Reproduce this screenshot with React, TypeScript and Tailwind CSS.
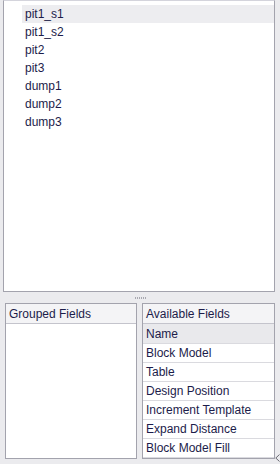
import React from "react";

const items = ["pit1_s1", "pit1_s2", "pit2", "pit3", "dump1", "dump2", "dump3"];
const fields = [
  "Block Model",
  "Table",
  "Design Position",
  "Increment Template",
  "Expand Distance",
  "Block Model Fill",
];

export default function App() {
  return (
    <div
      className="w-[280px] h-[464px] bg-[#ebebee] flex flex-col overflow-hidden relative text-[12px] text-[#1c1c4a]"
      style={{ fontFamily: '"Liberation Sans", Arial, sans-serif' }}
    >
      {/* top list */}
      <div className="ml-[3px] w-[272px] h-[292px] bg-white border border-[#a3a3ad] border-t-[#d4d4dc] pt-[4px] flex flex-col">
        {items.map((it, i) => (
          <div
            key={it}
            className={`h-[18px] ml-[18px] pl-[3px] flex items-center ${
              i === 0 ? "bg-[#ededf0]" : ""
            }`}
          >
            {it}
          </div>
        ))}
      </div>

      {/* splitter grip */}
      <div className="h-[11px] flex items-center justify-center">
        <div className="flex gap-[1px]">
          {[0, 1, 2, 3, 4, 5].map((d) => (
            <div key={d} className="w-[1px] h-[2px] bg-[#a8a8b0]" />
          ))}
        </div>
      </div>

      {/* bottom panels */}
      <div className="flex gap-[5px] ml-[5px] h-[156px]">
        <div className="w-[132px] bg-white border border-[#a3a3ad] flex flex-col">
          <div className="h-[20px] flex items-center pl-[3px] bg-[#f4f4f6] border-b border-[#c4c4cc]">
            Grouped Fields
          </div>
        </div>
        <div className="w-[133px] bg-white border border-[#a3a3ad] flex flex-col">
          <div className="h-[20px] flex items-center pl-[3px] bg-[#f4f4f6] border-b border-[#c4c4cc]">
            Available Fields
          </div>
          <div className="h-[20px] flex items-center pl-[3px] bg-[#e9e9ec] border-b border-[#dadadf]">
            Name
          </div>
          {fields.map((f) => (
            <div
              key={f}
              className="h-[19px] shrink-0 flex items-center pl-[3px] border-b border-[#dadadf]"
            >
              {f}
            </div>
          ))}
        </div>
      </div>

      {/* size grip */}
      <svg
        className="absolute right-0 bottom-[2px]"
        width="5"
        height="8"
        viewBox="0 0 5 8"
      >
        <path d="M4.5 0.5 L0.8 4 L4.5 7.5" fill="none" stroke="#6a6a74" strokeWidth="1" />
      </svg>
    </div>
  );
}
